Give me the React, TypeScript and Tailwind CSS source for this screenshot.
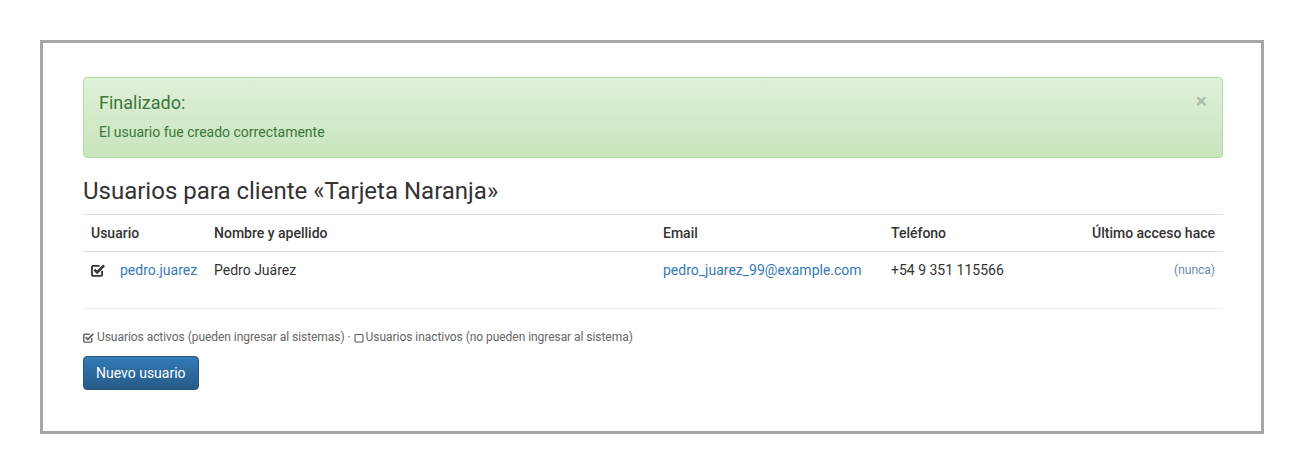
import React from "react";

function CheckSquare({ size = 13, color = "#333" }: { size?: number; color?: string }) {
  return (
    <svg width={size} height={size} viewBox="0 0 13 13" fill="none">
      <path d="M10.3 7.2V11a1 1 0 0 1-1 1H1.9a1 1 0 0 1-1-1V3.6a1 1 0 0 1 1-1H8" stroke={color} strokeWidth="1.7" />
      <path d="M3.2 6.2l2.5 2.5 6.4-6.5" stroke={color} strokeWidth="2.4" />
    </svg>
  );
}

function Square({ size = 11, color = "#555" }: { size?: number; color?: string }) {
  return (
    <svg width={size} height={size} viewBox="0 0 12 12" fill="none">
      <rect x="1.2" y="1.7" width="9.6" height="9" rx="1.2" stroke={color} strokeWidth="1.3" />
    </svg>
  );
}

export default function App() {
  return (
    <div className="bg-white p-[40px] font-['Roboto',sans-serif] text-[14px] text-[#333]">
      <div className="w-[1224px] h-[394px] border-[3px] border-[#a6a6a6] pl-[40px] pt-[34px]">
        <div className="w-[1140px]">
          {/* Alert */}
          <div className="relative rounded-[4px] border border-[#b2dba1] bg-[linear-gradient(to_bottom,#dff0d8_0%,#c8e5bc_100%)] px-[15px] pt-[15px] pb-[15px] text-[#3c763d]">
            <div className="absolute right-[15px] top-[13px] text-[21px] font-bold leading-[21px] text-black opacity-20">×</div>
            <div className="text-[18px] leading-[20px] mb-[9px]">Finalizado:</div>
            <div className="leading-[20px]">El usuario fue creado correctamente</div>
          </div>

          <h3 className="mt-[20px] mb-[10px] text-[24px] leading-[26px] font-normal text-[#333]">
            Usuarios para cliente «Tarjeta Naranja»
          </h3>

          <table className="w-full table-fixed border-collapse">
            <thead>
              <tr className="border-t border-[#ddd] border-b border-b-[#ddd]">
                <th className="w-[123px] px-[8px] py-[8px] text-left font-medium leading-[20px]">Usuario</th>
                <th className="w-[449px] px-[8px] py-[8px] text-left font-medium leading-[20px]">Nombre y apellido</th>
                <th className="w-[228px] px-[8px] py-[8px] text-left font-medium leading-[20px]">Email</th>
                <th className="w-[130px] px-[8px] py-[8px] text-left font-medium leading-[20px]">Teléfono</th>
                <th className="px-[8px] py-[8px] text-right font-medium leading-[20px]">Último acceso hace</th>
              </tr>
            </thead>
            <tbody>
              <tr>
                <td className="px-[8px] py-[8px] leading-[20px]">
                  <div className="flex items-center">
                    <span className="mr-[15px] flex"><CheckSquare size={14} /></span>
                    <a className="text-[#337ab7]">pedro.juarez</a>
                  </div>
                </td>
                <td className="px-[8px] py-[8px] leading-[20px]">Pedro Juárez</td>
                <td className="px-[8px] py-[8px] leading-[20px] text-[#337ab7] whitespace-nowrap">pedro_juarez_99@example.com</td>
                <td className="px-[8px] py-[8px] leading-[20px] whitespace-nowrap">+54 9 351 115566</td>
                <td className="px-[8px] py-[8px] leading-[20px] text-right text-[12px] text-[#6d88a6]">(nunca)</td>
              </tr>
            </tbody>
          </table>

          <div className="mt-[20px] mb-[20px] border-t border-[#eee]" />

          <p className="flex items-center text-[12px] leading-[17px] text-[#666] mb-[10px] tracking-[-0.05px]">
            <span className="mr-[3px] flex"><CheckSquare size={11} color="#666" /></span>
            Usuarios activos (pueden ingresar al sistemas) ·
            <span className="ml-[3px] mr-[2px] flex"><Square size={10} color="#555" /></span>
            Usuarios inactivos (no pueden ingresar al sistema)
          </p>

          <button className="h-[34px] rounded-[4px] border border-[#245580] bg-[linear-gradient(to_bottom,#337ab7_0%,#265a88_100%)] px-[12px] text-[14px] leading-[20px] text-white">
            Nuevo usuario
          </button>
        </div>
      </div>
    </div>
  );
}
